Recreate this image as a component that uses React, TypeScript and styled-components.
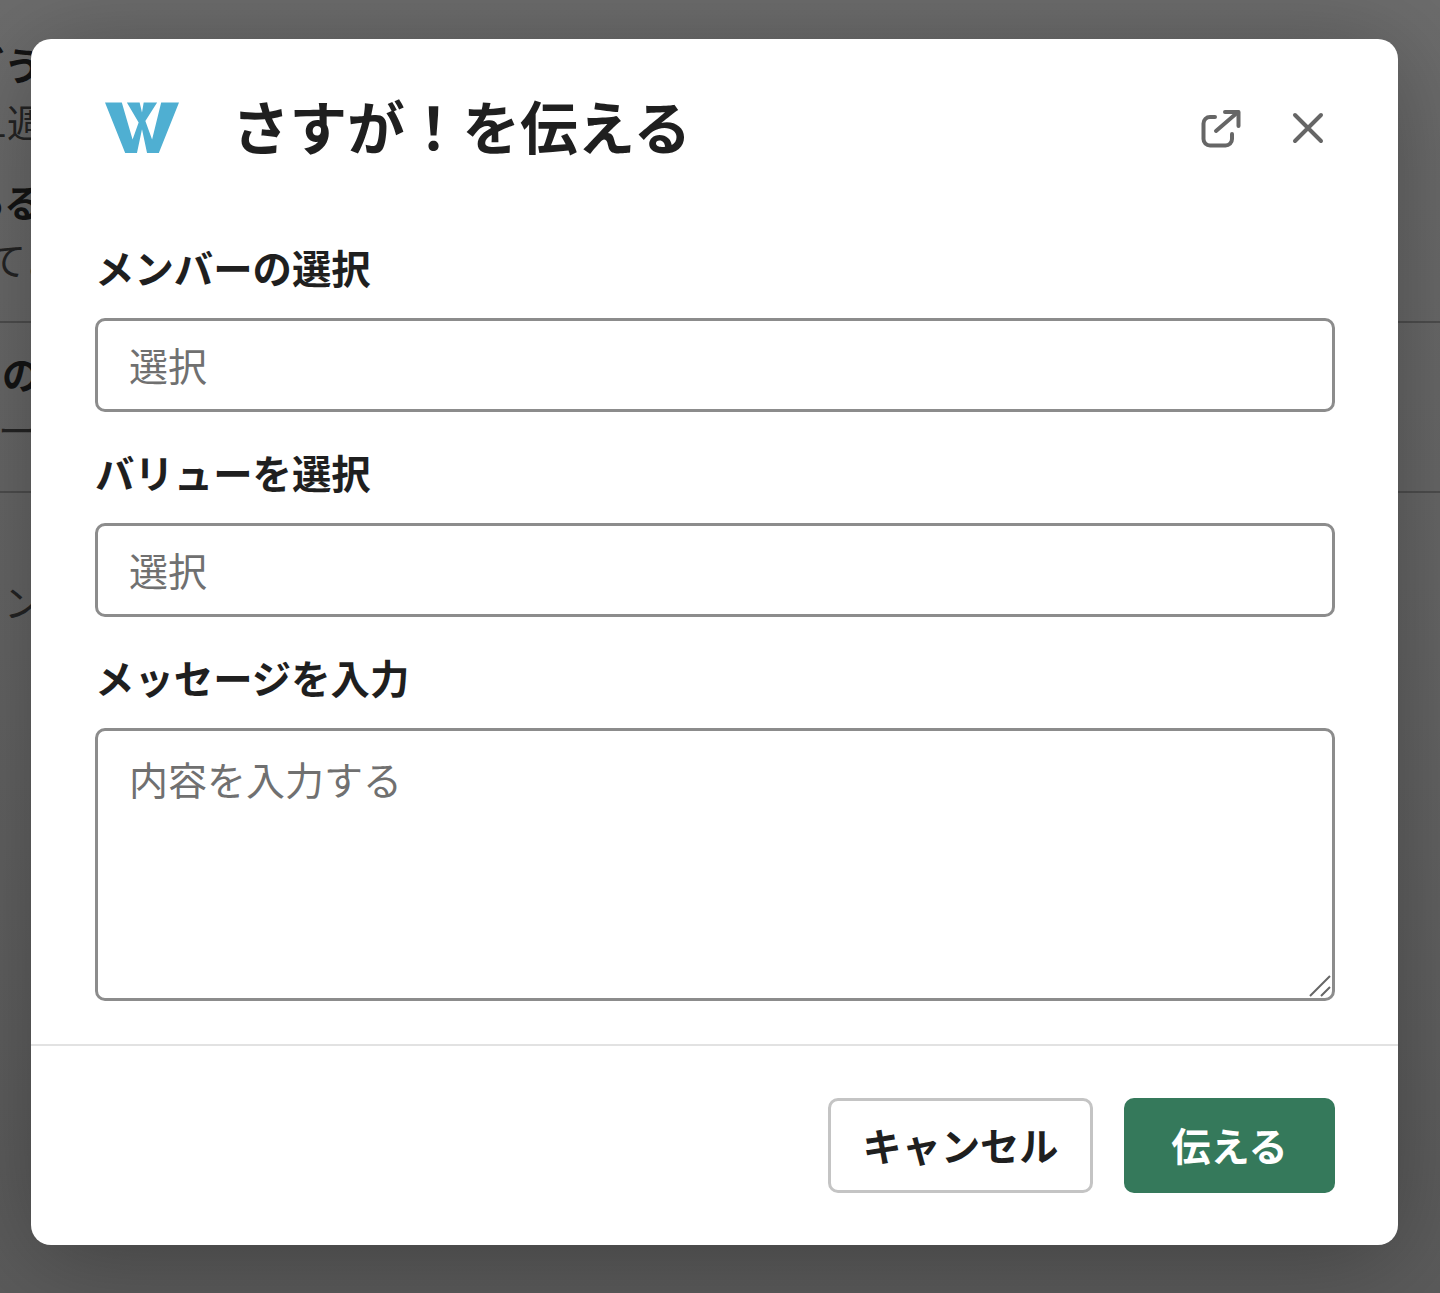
import React from 'react';
import styled, { createGlobalStyle } from 'styled-components';

const GlobalStyle = createGlobalStyle`
  html, body {
    margin: 0;
    padding: 0;
    background: #5c5c5c;
  }

  * {
    box-sizing: border-box;
  }
`;

const fontStack = `"Noto Sans CJK JP", "Noto Sans", sans-serif`;

const Page = styled.div`
  position: relative;
  width: 1440px;
  height: 1293px;
  overflow: hidden;
  font-family: ${fontStack};
  background: linear-gradient(180deg, #6c6c6c 0%, #666 45%, #5b5b5b 100%);
`;

const BackdropSection = styled.section<{ $height: number }>`
  height: ${(p) => p.$height}px;
  border-bottom: 2px solid #4e4e4e;
  overflow: hidden;

  &:last-of-type {
    border-bottom: none;
  }
`;

const BackdropRow = styled.div<{ $top: number; $indent: number; $bold?: boolean }>`
  height: 56px;
  margin-top: ${(p) => p.$top}px;
  margin-left: ${(p) => p.$indent}px;
  font-size: 38px;
  line-height: 56px;
  font-weight: ${(p) => (p.$bold ? 700 : 400)};
  color: ${(p) => (p.$bold ? '#141414' : '#242424')};
  white-space: nowrap;
`;

const Dialog = styled.div`
  position: absolute;
  left: 31px;
  top: 39px;
  width: 1367px;
  height: 1206px;
  display: flex;
  flex-direction: column;
  background: #fff;
  border-radius: 20px;
  box-shadow: 0 14px 100px rgba(0, 0, 0, 0.3);
`;

const Header = styled.header`
  display: flex;
  align-items: center;
  height: 178px;
  padding: 0 73px 0 74px;
`;

const Logo = styled.svg`
  width: 74px;
  height: 52px;
  flex: none;
  margin-right: 53px;
`;

const Title = styled.h1`
  flex: 1;
  margin: 0;
  padding-bottom: 6px;
  font-size: 57.6px;
  line-height: 80px;
  font-weight: 700;
  color: #1f1f1f;
  white-space: nowrap;
`;

const HeaderActions = styled.div`
  display: flex;
  align-items: center;
  gap: 50px;
`;

const IconButton = styled.button`
  display: flex;
  padding: 0;
  border: none;
  background: none;
  color: #666;
`;

const Form = styled.form`
  display: flex;
  flex-direction: column;
  gap: 37px;
  margin-top: 27px;
  padding: 0 63px 0 64px;
`;

const Field = styled.div`
  display: flex;
  flex-direction: column;
  gap: 24px;
`;

const Label = styled.label`
  height: 50px;
  font-size: 39.4px;
  line-height: 46px;
  font-weight: 700;
  color: #1f1f1f;
  white-space: nowrap;
`;

const TextInput = styled.input`
  width: 100%;
  height: 94px;
  padding: 0 31px 2px;
  border: 3px solid #8c8c8c;
  border-radius: 10px;
  background: #fff;
  font-family: ${fontStack};
  font-size: 39px;
  outline: none;

  &::placeholder {
    color: #707070;
    opacity: 1;
  }
`;

const TextAreaWrap = styled.div`
  position: relative;
  display: flex;
`;

const TextArea = styled.textarea`
  width: 100%;
  height: 273px;
  padding: 22px 31px;
  border: 3px solid #8c8c8c;
  border-radius: 10px;
  background: #fff;
  font-family: ${fontStack};
  font-size: 39px;
  line-height: 50px;
  outline: none;
  resize: none;

  &::placeholder {
    color: #707070;
    opacity: 1;
  }
`;

const ResizeHandle = styled.svg`
  position: absolute;
  right: 3px;
  bottom: 3px;
  width: 24px;
  height: 24px;
  color: #666;
  pointer-events: none;
`;

const Footer = styled.footer`
  display: flex;
  justify-content: flex-end;
  gap: 31px;
  margin-top: 43px;
  padding: 52px 63px;
  border-top: 2px solid #e2e2e2;
`;

const Button = styled.button<{ $primary?: boolean }>`
  height: 95px;
  width: ${(p) => (p.$primary ? 211 : 265)}px;
  padding: 0 0 4px;
  border: ${(p) => (p.$primary ? 'none' : '3px solid #c4c4c4')};
  border-radius: 10px;
  background: ${(p) => (p.$primary ? '#35795b' : '#fff')};
  color: ${(p) => (p.$primary ? '#fff' : '#1f1f1f')};
  font-family: ${fontStack};
  font-size: 39.2px;
  font-weight: 700;
`;

export default function App() {
  return (
    <Page>
      <GlobalStyle />
      <BackdropSection $height={323}>
        <BackdropRow $top={36} $indent={-34} $bold>
          ごう
        </BackdropRow>
        <BackdropRow $top={1} $indent={-14}>
          1週間
        </BackdropRow>
        <BackdropRow $top={24} $indent={-34} $bold>
          ある
        </BackdropRow>
        <BackdropRow $top={2} $indent={-12}>
          てよ
        </BackdropRow>
      </BackdropSection>
      <BackdropSection $height={170}>
        <BackdropRow $top={22} $indent={2} $bold>
          の
        </BackdropRow>
        <BackdropRow $top={0} $indent={-2}>
          ー
        </BackdropRow>
      </BackdropSection>
      <BackdropSection $height={200}>
        <BackdropRow $top={80} $indent={4}>
          ン
        </BackdropRow>
      </BackdropSection>

      <Dialog>
        <Header>
          <Logo viewBox="0 0 220 152" aria-label="logo">
            <polygon
              fill="#4fafd2"
              points="0,0 50,0 82,110 100,60 65,0 103,0 110,30 115,0 155,0 120,55 140,110 167,0 220,0 160,150 125,150 110,80 95,150 60,150"
            />
          </Logo>
          <Title>さすが！を伝える</Title>
          <HeaderActions>
            <IconButton type="button" aria-label="open">
              <svg width="40" height="40" viewBox="0 0 40 40" fill="none" stroke="currentColor" strokeWidth="4" strokeLinecap="round" strokeLinejoin="round">
                <path d="M14 9H9a6.5 6.5 0 0 0-6.5 6.5V31A6.5 6.5 0 0 0 9 37.5h15.5A6.5 6.5 0 0 0 31 31v-5" />
                <path d="M15 23L37 4" />
                <path d="M24 4h13.5v14" />
              </svg>
            </IconButton>
            <IconButton type="button" aria-label="close">
              <svg width="34" height="34" viewBox="0 0 34 34" fill="none" stroke="currentColor" strokeWidth="4" strokeLinecap="round">
                <path d="M4 4l26 26M30 4L4 30" />
              </svg>
            </IconButton>
          </HeaderActions>
        </Header>

        <Form>
          <Field>
            <Label>メンバーの選択</Label>
            <TextInput placeholder="選択" />
          </Field>
          <Field>
            <Label>バリューを選択</Label>
            <TextInput placeholder="選択" />
          </Field>
          <Field>
            <Label>メッセージを入力</Label>
            <TextAreaWrap>
              <TextArea placeholder="内容を入力する" />
              <ResizeHandle viewBox="0 0 24 24" fill="none" stroke="currentColor" strokeWidth="2">
                <path d="M2 22L22 2M13 22l9-9" />
              </ResizeHandle>
            </TextAreaWrap>
          </Field>
        </Form>

        <Footer>
          <Button type="button">キャンセル</Button>
          <Button type="button" $primary>
            伝える
          </Button>
        </Footer>
      </Dialog>
    </Page>
  );
}
